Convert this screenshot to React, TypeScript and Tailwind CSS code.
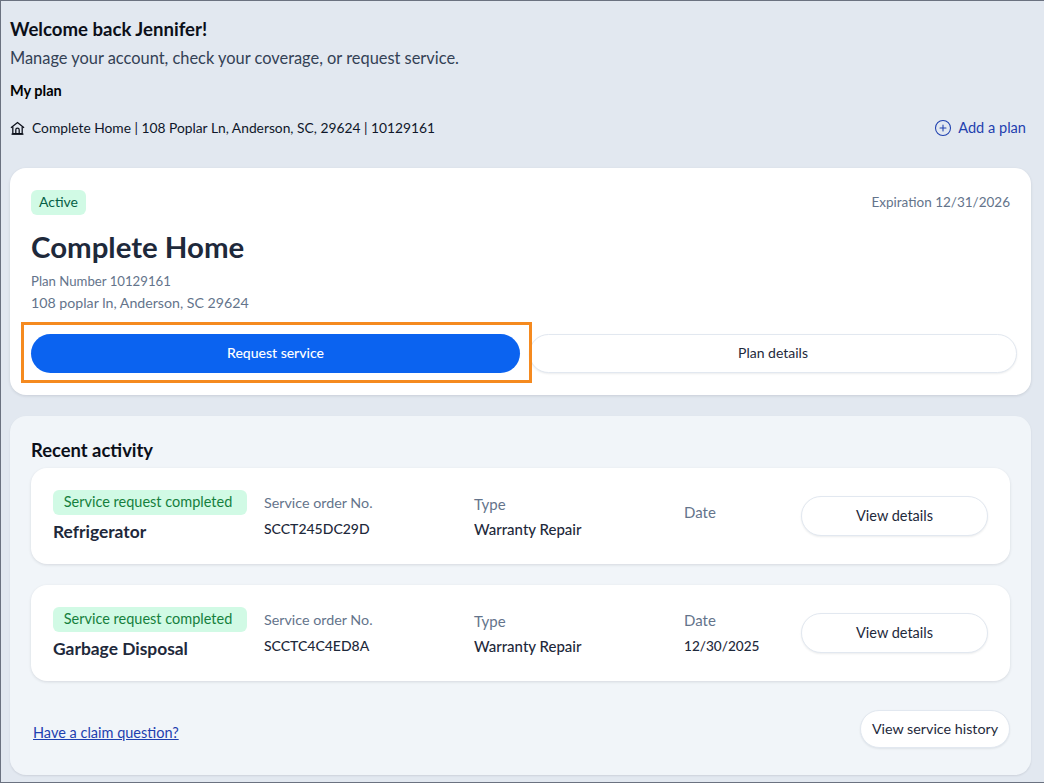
import { CirclePlus } from "lucide-react";

const font = "font-['Lato','Noto_Sans',sans-serif]";

const activity = [
  { name: "Refrigerator", order: "SCCT245DC29D", type: "Warranty Repair", date: "" },
  { name: "Garbage Disposal", order: "SCCTC4C4ED8A", type: "Warranty Repair", date: "12/30/2025" },
];

const HomeIcon = () => (
  <svg viewBox="0 0 16 16" className="size-[15px] shrink-0" fill="none" stroke="#0b0f19" strokeWidth="1.35">
    <path d="M1 7.2 8 1.6l7 5.6" />
    <path d="M3 6v7.6h10V6" />
    <path d="M1.6 14h12.8" />
    <path d="M6.2 13.6V9.4a1.8 1.8 0 0 1 3.6 0v4.2" />
  </svg>
);

const ActivityCard = ({ item }: { item: (typeof activity)[number] }) => (
  <div className="flex h-[96px] items-center rounded-2xl bg-white px-[22px] shadow-[0_1px_3px_rgba(15,23,42,0.12)]">
    <div className="w-[211px]">
      <span className="inline-block h-[25px] w-[194px] rounded-md bg-[#d1fae5] pr-1 text-center text-[14.5px] leading-[24px] text-[#15803d]">
        Service request completed
      </span>
      <div className="mt-[5px] text-[17.4px] font-bold leading-6 text-[#1e293b]">{item.name}</div>
    </div>
    <div className="w-[210px]">
      <div className="text-[14.3px] leading-5 text-[#64748b]">Service order No.</div>
      <div className="mt-[6px] text-[14px] font-medium leading-5 text-[#1e293b]">{item.order}</div>
    </div>
    <div className="w-[210px]">
      <div className="text-[15px] leading-5 text-[#64748b]">Type</div>
      <div className="mt-[5px] text-[15px] font-medium leading-5 text-[#1e293b]">{item.type}</div>
    </div>
    <div className={`w-[117px] ${item.date ? "" : "-mt-[8px]"}`}>
      <div className="text-[15px] leading-5 text-[#64748b]">Date</div>
      {item.date && <div className="mt-[6px] text-[13.6px] font-medium leading-5 text-[#1e293b]">{item.date}</div>}
    </div>
    <button className="h-[40px] w-[187px] rounded-full border border-[#e2e8f0] bg-white text-[14.5px] text-[#1e293b] shadow-[0_1px_2px_rgba(15,23,42,0.08)]">
      View details
    </button>
  </div>
);

export default function App() {
  return (
    <div className={`${font} h-[783px] w-[1044px] overflow-hidden border-y border-l border-[#6b7280] bg-[#e2e8f0] pl-[9px] pr-[13px] pt-[18px]`}>
      <h1 className="text-[18.6px] font-bold leading-5 text-[#0b0f19]">Welcome back Jennifer!</h1>
      <p className="mt-[8px] text-[16.4px] leading-[22px] text-[#334155]">Manage your account, check your coverage, or request service.</p>
      <div className="mt-[12px] text-[14.5px] font-bold leading-5 text-black">My plan</div>

      <div className="mt-[17px] flex items-center justify-between pr-[5px]">
        <div className="flex items-center gap-[7px] text-[13.8px] leading-5 text-[#0f172a]">
          <HomeIcon />
          <span>Complete Home | 108 Poplar Ln, Anderson, SC, 29624 | 10129161</span>
        </div>
        <a className="flex items-center gap-[6px] text-[14.6px] leading-5 text-[#1e40af]">
          <CirclePlus className="size-[18px]" strokeWidth={1.4} />
          Add a plan
        </a>
      </div>

      <section className="relative mt-[30px] h-[227px] rounded-2xl bg-white px-[21px] pt-[22px] shadow-[0_1px_3px_rgba(15,23,42,0.12)]">
        <div className="flex items-start justify-between">
          <span className="h-[25px] w-[55px] rounded-md bg-[#d1fae5] text-center text-[14px] leading-[24px] text-[#065f46]">Active</span>
          <span className="text-[13.5px] leading-6 text-[#64748b]">Expiration 12/31/2026</span>
        </div>
        <h2 className="mt-[13px] text-[29.4px] font-bold leading-[38px] text-[#1e293b]">Complete Home</h2>
        <div className="mt-[4px] text-[14.2px] leading-[22px] text-[#64748b]">
          <div className="text-[13.2px]">Plan Number 10129161</div>
          <div>108 poplar ln, Anderson, SC 29624</div>
        </div>
        <div className="mt-[20px] flex w-[986px] gap-[9px]">
          <button className="h-[39px] w-[489px] rounded-full bg-[#0b63f0] pb-[2px] text-[14px] font-medium text-white">Request service</button>
          <button className="h-[39px] w-[488px] rounded-full border border-[#e2e8f0] bg-white pb-[2px] text-[14px] text-[#1e293b] shadow-[0_1px_2px_rgba(15,23,42,0.08)]">Plan details</button>
        </div>
        <div className="absolute left-[11px] top-[154px] h-[61px] w-[511px] border-[3px] border-[#f58a1f]" />
      </section>

      <section className="mt-[21px] h-[359px] rounded-2xl bg-[#f1f5f9] px-[21px] pt-[23px] shadow-[0_1px_2px_rgba(15,23,42,0.1)]">
        <h3 className="text-[18.4px] font-bold leading-[22px] text-[#0b0f19]">Recent activity</h3>
        <div className="mt-[7px] flex flex-col gap-[21px]">
          {activity.map((item) => (
            <ActivityCard key={item.order} item={item} />
          ))}
        </div>
        <div className="mt-[29px] flex items-center justify-between">
          <a className="ml-[2px] mt-[8px] text-[14.5px] leading-5 text-[#1e40af] underline">Have a claim question?</a>
          <button className="h-[38px] w-[150px] rounded-full border border-[#e2e8f0] bg-white text-[14.3px] text-[#1e293b] shadow-[0_1px_2px_rgba(15,23,42,0.08)]">
            View service history
          </button>
        </div>
      </section>
    </div>
  );
}
